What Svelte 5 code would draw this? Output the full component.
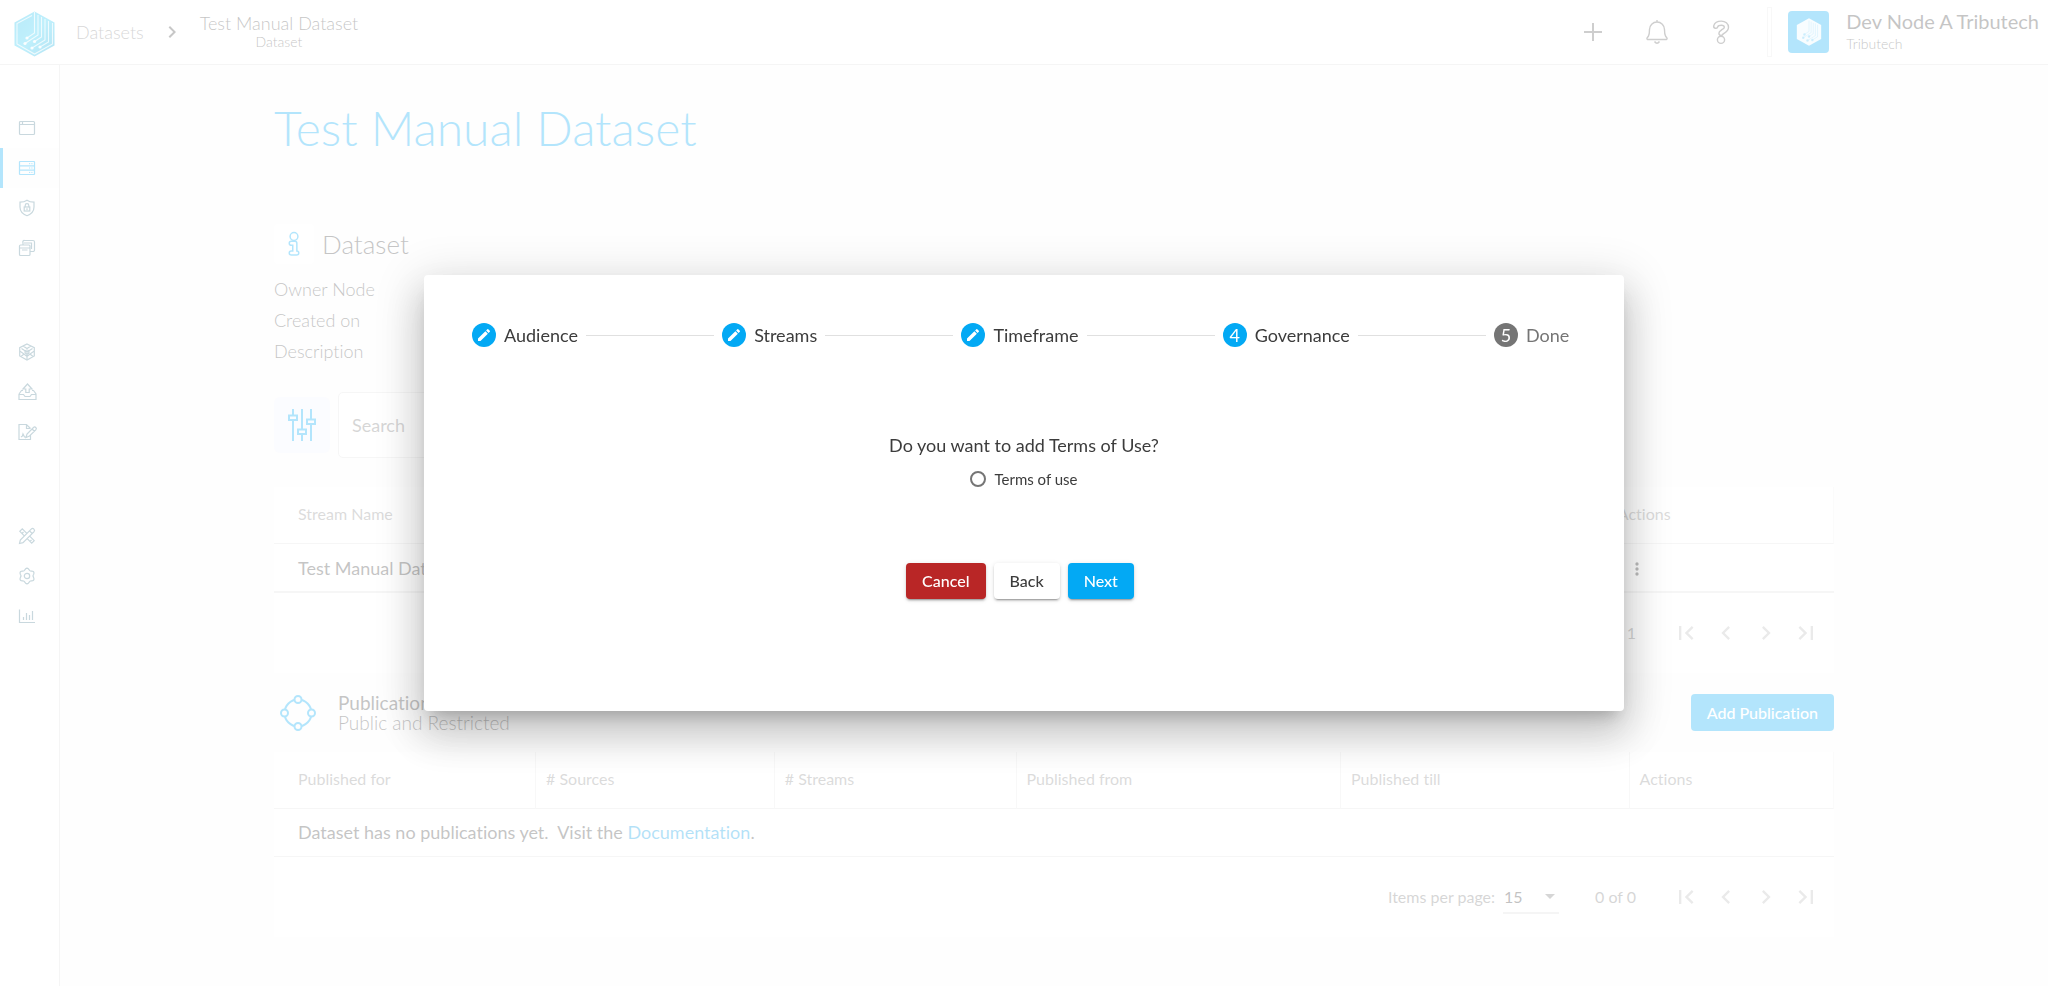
<script>
  const columns = [
    { label: 'Published for', width: 16.8 },
    { label: '# Sources', width: 15.3 },
    { label: '# Streams', width: 15.5 },
    { label: 'Published from', width: 20.8 },
    { label: 'Published till', width: 18.5 },
    { label: 'Actions', width: 13.1 }
  ];
  const steps = [
    { label: 'Audience', state: 'edit' },
    { label: 'Streams', state: 'edit' },
    { label: 'Timeframe', state: 'edit' },
    { label: 'Governance', state: 'current' },
    { label: 'Done', state: 'todo' }
  ];
  const nav = [
    ['window', 'servers', 'shield', 'layers'],
    ['cube', 'upload', 'sign'],
    ['tools', 'gear', 'chart']
  ];
  const navLabels = {
    window: 'Dashboard', servers: 'Datasets', shield: 'Security', layers: 'Twins',
    cube: 'Blockchain', upload: 'Upload', sign: 'Contracts',
    tools: 'Tools', gear: 'Settings', chart: 'Statistics'
  };
  // Six soft lobes around the centre of an 18px box.
  const gearPoints = Array.from({ length: 72 }, (_, i) => {
    const a = (i / 72) * Math.PI * 2;
    const r = 6.9 - 0.9 * Math.cos(6 * a);
    return `${(9 + r * Math.cos(a)).toFixed(2)},${(9 + r * Math.sin(a)).toFixed(2)}`;
  }).join(' ');
</script>

{#snippet logo()}
  <path d="M20.500 0.500 40.500 11.500V34.500L20.500 45.500 0.500 34.500V11.500Z" />
  <g fill="none" stroke="#fff" stroke-width="1.100" opacity=".75">
    <path d="M18 4.500 3 12.500V33L20.500 43 38.500 33V12" />
    <path d="M20.500 1V22L13 27M24 4V24L11 32.500M27.500 6V26L20.500 30.500M31 8V29L18 37M34.500 10V31L26 36" />
  </g>
  <g fill="#fff" opacity=".9">
    <circle cx="13" cy="27" r="1.600" /><circle cx="11" cy="32.500" r="1.600" /><circle cx="20.500" cy="30.500" r="1.600" />
    <circle cx="18" cy="37" r="1.600" /><circle cx="26" cy="36" r="1.600" />
  </g>
{/snippet}

{#snippet navIcon(name)}
  <svg width="18" height="18" viewBox="0 0 18 18" aria-hidden="true">
    {#if name === 'window'}
      <rect x="1.500" y="2.500" width="15" height="13" rx="1" /><path d="M1.500 5.500H16.500M4.500 2.500V5.500" />
    {:else if name === 'servers'}
      <rect x="1.500" y="2.500" width="15" height="13" rx=".5" /><path d="M1.500 6.800H16.500M1.500 11.200H16.500" /><path stroke-width="1" d="M11 4.700H12.200M13.300 4.700H14.500M11 9H12.200M13.300 9H14.500M11 13.400H12.200M13.300 13.400H14.500" />
    {:else if name === 'shield'}
      <path d="M9 1.200C7 2.700 4.500 3.200 2 3.200V8C2 12 4.500 15 9 16.700 13.500 15 16 12 16 8V3.200C13.500 3.200 11 2.700 9 1.200Z" /><rect x="6.200" y="8" width="5.600" height="4" /><path d="M7.200 8V6.500A1.800 1.800 0 0 1 10.800 6.500V8M9 9.300V11" />
    {:else if name === 'layers'}
      <rect x="1.500" y="6" width="10.500" height="10.500" rx="1" /><path d="M1.500 9H12M4 11H9.500M5 6V3.800A1.500 1.500 0 0 1 6.500 1.500H15A1.500 1.500 0 0 1 16.500 3V11A1.500 1.500 0 0 1 15 12.500H12M6 4H13.500V10" />
    {:else if name === 'cube'}
      <path d="M9 1 16.300 4.700V13L9 17 1.700 13V4.700ZM3.500 5.600 9 9 14.500 5.600M9 9V16M1.700 8 6 11 3 13.500M16.300 8 12 11 15 13.500M5 3 9 5.500 13 3M6 11 9 13.500 12 11" /><circle cx="9" cy="9" r="2" />
    {:else if name === 'upload'}
      <path d="M1 11V16.500H18V11L15.500 7.500H14M1 11 3.500 7.500H5M1 11.500H5.500L7 13.500H12L13.500 11.500H18M7.800 9.500V6H5L9.500 1 14 6H11.200V9.500Z" />
    {:else if name === 'sign'}
      <path d="M12.500 12V16.500H1V1.500H8.500L12.500 5.500M8.500 1.500V5.500H12.500M3 14 4.500 13 5 11 6.500 14H8M8 14.500 9 11 15.500 4.500A1.300 1.300 0 0 1 17.800 6.800L11.500 13ZM14 6 16.500 8.300" />
    {:else if name === 'tools'}
      <path d="M6.300 8.800 1.800 4.300 4.300 1.800 8.800 6.300M11.700 9.200 16.200 13.700 13.700 16.200 9.200 11.700M1.500 16.500 2.300 13 13.200 2.100A1.500 1.500 0 0 1 15.900 4.800L5 15.700ZM11.500 3.800 14.200 6.500M4 6.500 5.500 5M12 14.500 13.500 13" />
    {:else if name === 'gear'}
      <polygon points={gearPoints} /><circle cx="9" cy="9" r="2.700" />
    {:else}
      <path d="M1.500 2.500V15.500H17M5.500 13V10M8.500 13V6M11.500 13V8M14.500 13V4" />
    {/if}
  </svg>
{/snippet}

{#snippet pager()}
  <div class="pager">
    <button aria-label="First page"><svg viewBox="0 0 24 24"><path d="M18.410 16.590 13.820 12l4.590-4.590L17 6l-6 6 6 6zM6 6h2v12H6z" /></svg></button>
    <button aria-label="Previous page"><svg viewBox="0 0 24 24"><path d="M15.410 7.410 14 6l-6 6 6 6 1.410-1.410L10.830 12z" /></svg></button>
    <button aria-label="Next page"><svg viewBox="0 0 24 24"><path d="M10 6 8.590 7.410 13.170 12l-4.580 4.590L10 18l6-6z" /></svg></button>
    <button aria-label="Last page"><svg viewBox="0 0 24 24"><path d="M5.590 7.410 10.180 12l-4.590 4.590L7 18l6-6-6-6zM16 6h2v12h-2z" /></svg></button>
  </div>
{/snippet}

<div class="app">
  <header>
    <a class="logo" href="#home" aria-label="Home">
      <svg width="41" height="46" viewBox="0 0 41 46">
        <defs><linearGradient id="brand" x1="0" y1="0" x2="1" y2="1"><stop offset="0" stop-color="#16b8ea" /><stop offset=".5" stop-color="#2accf5" /><stop offset="1" stop-color="#08a3d8" /></linearGradient></defs>
        <g fill="url(#brand)">{@render logo()}</g>
      </svg>
    </a>
    <nav class="crumbs" aria-label="Breadcrumb">
      <a href="#datasets">Datasets</a>
      <svg width="24" height="24" viewBox="0 0 24 24" aria-hidden="true"><path d="M10 6 8.590 7.410 13.170 12l-4.580 4.590L10 18l6-6z" /></svg>
      <div class="here"><span>Test Manual Dataset</span><small>Dataset</small></div>
    </nav>
    <div class="tools">
      <button aria-label="Add"><svg width="24" height="24" viewBox="0 0 24 24"><path d="M12 3V21M3 12H21" stroke-width="2" /></svg></button>
      <button aria-label="Notifications"><svg width="24" height="24" viewBox="0 0 24 24"><path d="M12 0V2M9.500 21.500Q12 25 14.500 21.500M2.500 19.500C1 18.500 2.500 17.500 3.500 16 4.500 14 4.500 12 4.500 9.500A7.500 7.500 0 0 1 19.500 9.500C19.500 12 19.500 14 20.500 16 21.500 17.500 23 18.500 21.500 19.500Z" stroke-width="1.400" /></svg></button>
      <button aria-label="Help"><svg width="24" height="24" viewBox="0 0 24 24"><g stroke-linecap="round"><path id="hook" d="M6.800 6.200C7.500 3.800 9.800 3.200 12.300 3.200 15.500 3.200 17.400 5 17.400 7.300 17.400 10 15 10.800 13.500 11.800 12.300 12.600 12 12.800 12 13.300" stroke-width="5.600" /><path class="hollow" d="M6.800 6.200C7.500 3.800 9.800 3.200 12.300 3.200 15.500 3.200 17.400 5 17.400 7.300 17.400 10 15 10.800 13.500 11.800 12.300 12.600 12 12.800 12 13.300" stroke-width="2.800" /></g><circle cx="12" cy="19.800" r="3.600" stroke-width="1.400" /></svg></button>
    </div>
    <div class="account">
      <span class="avatar"><svg width="26" height="28" viewBox="0 0 41 46" aria-hidden="true"><path d="M20.500 .5 40.500 11.500V34.500L20.500 45.500 .5 34.500V11.500Z" fill="#fff" opacity=".9" /><g fill="none" stroke="#03a9f4" stroke-width="1.200" opacity=".4"><path d="M20.500 4V22L13 27M24 6V24L11 32.500M27.500 8V26L20.500 30.500M31 9V29L18 37M34.500 11V31L26 36" /></g><g fill="#03a9f4" opacity=".6"><circle cx="13" cy="27" r="2" /><circle cx="11" cy="32.500" r="2" /><circle cx="20.500" cy="30.500" r="2" /><circle cx="18" cy="37" r="2" /><circle cx="26" cy="36" r="2" /></g></svg></span>
      <div><span class="who">Dev Node A Tributech</span><span class="org">Tributech</span></div>
    </div>
  </header>

  <div class="body">
    <aside>
      {#each nav as group}
        <div class="group">
          {#each group as name}
            <a href="#{name}" class:active={name === 'servers'} aria-label={navLabels[name]}>{@render navIcon(name)}</a>
          {/each}
        </div>
      {/each}
    </aside>

    <main>
      <div class="content">
        <h1>Test Manual Dataset</h1>
        <h2>
          <span class="badge"><svg width="14" height="26" viewBox="0 0 14 26" aria-hidden="true"><g stroke-linecap="round" stroke-linejoin="round"><path d="M4.300 12.300H7.800V22M4.300 22H9.700" stroke-width="5.600" /><path class="hollow" d="M4.300 12.300H7.800V22M4.300 22H9.700" stroke-width="2.600" /></g><circle cx="7" cy="5.500" r="3.900" /></svg></span>
          Dataset
        </h2>
        <dl><dt>Owner Node</dt><dt>Created on</dt><dt>Description</dt></dl>

        <div class="filter">
          <button class="sliders" aria-label="Filters"><svg width="28" height="32" viewBox="0 0 28 32"><path d="M5 0V6M5 11.500V32M14 0V20M14 25.500V32M23 0V10M23 15.500V32M1 6.500H9V11H1ZM10 20.500H18V25H10ZM19 10.500H27V15H19Z" /></svg></button>
          <input type="search" placeholder="Search" aria-label="Search" />
        </div>

        <section class="panel">
          <table>
            <thead><tr><th class="stream">Stream Name</th><th>Actions</th></tr></thead>
            <tbody><tr class="last"><td>Test Manual Dataset</td><td><button class="more" aria-label="Stream actions"><svg width="24" height="24" viewBox="0 0 24 24"><path d="M12 8a2 2 0 1 0 0-4 2 2 0 0 0 0 4zm0 2a2 2 0 1 0 0 4 2 2 0 0 0 0-4zm0 6a2 2 0 1 0 0 4 2 2 0 0 0 0-4z" /></svg></button></td></tr></tbody>
          </table>
          <div class="foot"><span class="range">1 – 1 of 1</span>{@render pager()}</div>
        </section>

        <div class="pubhead">
          <svg width="36" height="36" viewBox="0 0 36 36" aria-hidden="true"><circle cx="18" cy="18" r="13.500" /><g class="node"><circle cx="18" cy="4.500" r="3.500" /><circle cx="18" cy="31.500" r="3.500" /><circle cx="4.500" cy="18" r="3.500" /><circle cx="31.500" cy="18" r="3.500" /></g></svg>
          <div class="pubtext"><h3>Publications</h3><p>Public and Restricted</p></div>
          <button class="add">Add Publication</button>
        </div>

        <section class="panel">
          <table class="lined">
            <thead><tr>{#each columns as c}<th style="width:{c.width}%">{c.label}</th>{/each}</tr></thead>
            <tbody><tr><td colspan="6">Dataset has no publications yet.&nbsp; Visit the <a href="#docs">Documentation</a>.</td></tr></tbody>
          </table>
          <div class="foot">
            <label for="size">Items per page:</label>
            <span class="pick"><select id="size"><option>15</option></select></span>
            <span class="range">0 of 0</span>{@render pager()}
          </div>
        </section>
      </div>
    </main>
  </div>
</div>

<div class="backdrop">
  <div class="dialog" role="dialog" aria-modal="true" aria-label="Add publication">
    <ol class="stepper">
      {#each steps as step, i}
        {#if i > 0}<li class="line" aria-hidden="true"></li>{/if}
        <li class="step {step.state}">
          <span class="dot">{#if step.state === 'edit'}<svg width="16" height="16" viewBox="0 0 24 24" aria-hidden="true"><path d="M3 17.250V21h3.750L17.810 9.940l-3.750-3.750zM20.710 7.040a1 1 0 0 0 0-1.410l-2.340-2.340a1 1 0 0 0-1.410 0l-1.830 1.830 3.750 3.750z" /></svg>{:else}{i + 1}{/if}</span>
          <span class="label">{step.label}</span>
        </li>
      {/each}
    </ol>
    <p class="question">Do you want to add Terms of Use?</p>
    <label class="terms"><input type="radio" name="terms" /> Terms of use</label>
    <div class="actions">
      <button class="cancel">Cancel</button>
      <button>Back</button>
      <button class="next">Next</button>
    </div>
  </div>
</div>

<style>
  :global(body) { margin: 0; overflow: hidden; }
  .app, .backdrop { font-family: Lato, "Liberation Sans", sans-serif; font-size: 18px; color: #3c3c3c; font-variant-ligatures: none; }
  .app *, .backdrop * { box-sizing: border-box; }
  button, input, select { font: inherit; color: inherit; margin: 0; font-variant-ligatures: none; }
  button { border: 0; background: none; padding: 0; cursor: pointer; }
  a { color: inherit; text-decoration: none; }
  .app { min-height: 100vh; display: flex; flex-direction: column; background: #fafafa; }

  header { height: 65px; display: flex; align-items: center; background: #fff; border-bottom: 1px solid #ddd; padding: 0 9px 0 14px; }
  .logo { display: flex; margin-top: 4px; }
  .crumbs { display: flex; align-items: center; font-weight: 300; margin-left: 21px; flex: 1; }
  .crumbs > a { color: #777; }
  .crumbs > svg { margin: 0 16px; fill: #444; }
  .here { display: flex; flex-direction: column; align-items: center; line-height: 20px; padding-bottom: 1px; }
  .here small { font-size: 14px; line-height: 18px; }
  .tools { display: flex; gap: 40px; margin-right: 34px; }
  .tools svg { display: block; fill: none; stroke: #5c5c5c; overflow: visible; }
  .tools .hollow { stroke: #fff; }
  .account { display: flex; align-items: center; gap: 17px; }
  .account::before { content: ""; width: 3px; height: 48px; border: 1px solid #e6e6e6; margin-right: -1px; }
  .account > div { display: flex; flex-direction: column; padding-bottom: 2px; }
  .avatar { width: 41px; height: 42px; border-radius: 4px; background: #03a9f4; display: flex; align-items: center; justify-content: center; }
  .who { font-size: 20px; line-height: 26px; }
  .org { font-size: 14px; line-height: 20px; font-weight: 300; }

  .body { flex: 1; display: flex; }
  aside { width: 60px; flex: none; background: #fff; border-right: 1px solid #ddd; padding-top: 43px; display: flex; flex-direction: column; gap: 64px; }
  aside a { height: 40px; display: flex; align-items: center; padding-left: 15px; border-left: 3px solid transparent; }
  aside a.active { border-color: #03a9f4; background: #fafafa; }
  aside svg { fill: none; stroke: #4a7d90; stroke-width: 1.200; overflow: visible; }
  aside .active svg { stroke: #03a9f4; }

  main { flex: 1; padding: 33px 24px 32px; }
  .content { max-width: 1560px; margin: 0 auto; }
  h1 { margin: 0 0 66px; font-size: 48px; line-height: 60px; font-weight: 300; color: #03a9f4; }
  h2 { margin: 0 0 10px; display: flex; align-items: center; gap: 8px; height: 40px; font-size: 26px; font-weight: 300; }
  .badge { width: 40px; height: 40px; display: flex; align-items: center; justify-content: center; background: #fff; border-radius: 4px; }
  h2 svg { fill: none; stroke: #03a9f4; stroke-width: 1.500; }
  h2 .hollow { stroke: #fff; }
  dl { margin: 0 0 25px; line-height: 31px; font-weight: 300; }
  .filter { display: flex; align-items: center; gap: 8px; margin-bottom: 29px; }
  .sliders { width: 56px; height: 56px; border-radius: 6px; background: #f2f4fd; display: flex; align-items: center; justify-content: center; }
  .sliders svg { fill: none; stroke: #03a9f4; stroke-width: 2; }
  .filter input { flex: 0 1 600px; height: 66px; border: 1px solid #e0e0e0; border-radius: 5px; background: #fff; padding: 0 13px; outline: 0; }
  .filter input::placeholder { color: #777; opacity: 1; }

  .panel { background: #fff; }
  table { width: 100%; border-collapse: separate; border-spacing: 0; table-layout: fixed; }
  th { height: 57px; border-bottom: 1px solid #e2e2e2; padding: 0 0 3px 10px; text-align: left; font-size: 16px; font-weight: 400; color: #888; }
  td { height: 48px; border-bottom: 1px solid #e2e2e2; padding: 0 0 2px 10px; }
  .last td { height: 49px; border-bottom-width: 2px; padding-bottom: 0; }
  th:first-child, td:first-child { padding-left: 24px; }
  th:last-child { border-right: 1px solid #f0f0f0; }
  .stream { width: 85.5%; }
  .lined th:not(:last-child) { border-right: 1px solid #e8e8e8; }
  td a { color: #039be5; }
  .more { display: block; margin: 2px 0 0 9px; }
  .more svg { display: block; width: 20px; height: 20px; fill: #222; }
  .foot { height: 80px; display: flex; align-items: center; justify-content: flex-end; font-size: 16px; color: #777; padding-right: 8px; }
  .foot label, .range { padding-bottom: 2px; }
  .range { margin: 0 30px 0 36px; }
  .pager { display: flex; }
  .pager button { width: 40px; height: 40px; display: flex; align-items: center; justify-content: center; }
  .pager svg { width: 28px; height: 28px; fill: #b8b8b8; }
  .pick { position: relative; margin-left: 8px; border-bottom: 2px solid #ddd; color: #333; }
  .pick::after { content: ""; position: absolute; right: 4px; top: 14px; border: 5px solid transparent; border-top-color: #777; border-bottom: 0; pointer-events: none; }
  select { appearance: none; border: 0; background: none; width: 56px; height: 32px; padding: 0 0 0 1px; outline: 0; }

  .pubhead { height: 79px; display: flex; align-items: center; padding-left: 6px; }
  .pubhead > svg { fill: none; stroke: #03a9f4; stroke-width: 2; }
  .node { fill: #fafafa; }
  .pubtext { flex: 1; margin-left: 22px; line-height: 20px; }
  h3, .pubtext p { margin: 0; font-size: 19px; font-weight: 400; }
  .pubtext p { font-weight: 300; }
  .add { height: 37px; padding: 0 16px; border-radius: 4px; background: #03a9f4; color: #fff; font-size: 16px; font-weight: 500; }

  .backdrop { position: fixed; inset: 0; display: flex; align-items: center; justify-content: center; background: rgba(255, 255, 255, .7); }
  .dialog { width: 1200px; max-width: 90vw; min-height: 436px; background: #fff; border-radius: 4px; padding: 24px; display: flex; flex-direction: column; align-items: center;
    box-shadow: 0 11px 15px -7px rgba(0, 0, 0, .2), 0 24px 38px 3px rgba(0, 0, 0, .14), 0 9px 46px 8px rgba(0, 0, 0, .12); }
  .stepper { align-self: stretch; list-style: none; margin: 0; padding: 0 24px; height: 72px; display: flex; align-items: center; }
  .step { display: flex; align-items: center; gap: 8px; }
  .dot { width: 24px; height: 24px; border-radius: 50%; background: #03a9f4; color: #fff; display: flex; align-items: center; justify-content: center; }
  .dot svg { fill: #fff; }
  .label { min-width: 50px; }
  .todo .dot { background: #757575; }
  .todo { color: #757575; }
  .line { flex: 1; border-top: 1px solid #e0e0e0; margin: 0 8px; }
  .question { margin: 62px 0 0; line-height: 24px; }
  .terms { display: flex; align-items: center; gap: 8px; margin-top: 10px; height: 24px; font-size: 15px; }
  .terms input { appearance: none; width: 16px; height: 16px; border: 2px solid #757575; border-radius: 50%; }
  .actions { display: flex; gap: 8px; margin: 72px 8px 0 0; }
  .actions button { height: 36px; padding: 0 16px 2px; border-radius: 4px; background: #fff; font-size: 16px; font-weight: 500; box-shadow: 0 3px 1px -2px rgba(0, 0, 0, .2), 0 2px 2px 0 rgba(0, 0, 0, .14), 0 1px 5px 0 rgba(0, 0, 0, .12); }
  .actions .cancel { background: #b92626; color: #fff; }
  .actions .next { background: #03a9f4; color: #fff; }
</style>
